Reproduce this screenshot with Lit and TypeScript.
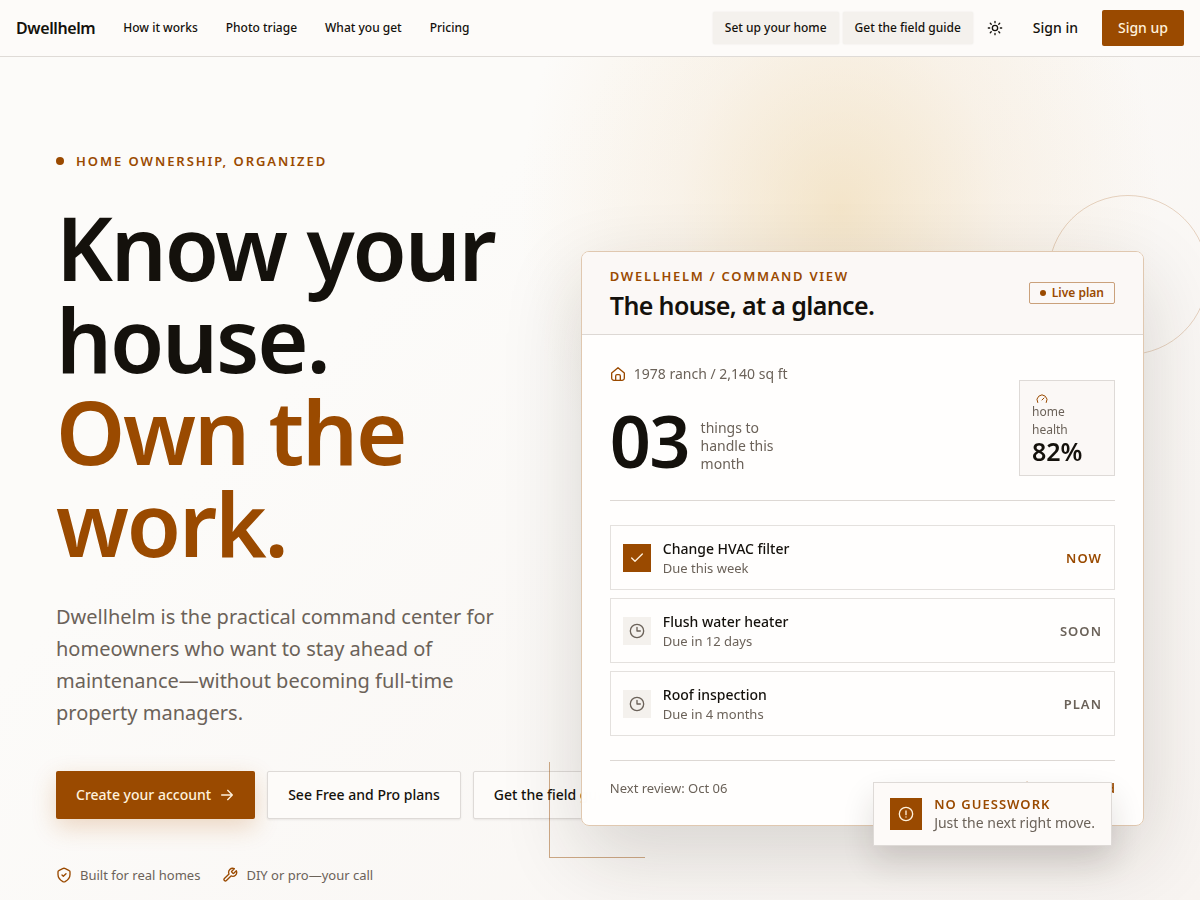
import { LitElement, html, css, svg } from "lit";
import { customElement } from "lit/decorators.js";

const icon = (size: number, body: unknown, cls = "") => html`<svg
  class="icon ${cls}" width=${size} height=${size} viewBox="0 0 24 24" fill="none"
  stroke="currentColor" stroke-width="2" stroke-linecap="round" stroke-linejoin="round"
  aria-hidden="true">${body}</svg>`;

const sun = svg`<circle cx="12" cy="12" r="4"/><path d="M12 2v2M12 20v2M4.93 4.93l1.41 1.41M17.66 17.66l1.41 1.41M2 12h2M20 12h2M6.34 17.66l-1.41 1.41M19.07 4.93l-1.41 1.41"/>`;
const arrow = svg`<path d="M4 12h16M13 5l7 7-7 7"/>`;
const shield = svg`<path d="M21 11.2V7.300c0-1.100-.3-1.600-1.200-2L14 2.400c-1.300-.6-2.700-.6-4 0L4.200 5.300C3.300 5.700 3 6.200 3 7.300v3.900c0 5.600 3.700 8.600 7.300 10.700 1.100.6 2.300.6 3.400 0C17.300 19.800 21 16.800 21 11.200z"/><path d="m9 12 2 2 4-4"/>`;
const wrench = svg`<path d="M14.7 6.3a1 1 0 0 0 0 1.4l1.6 1.6a1 1 0 0 0 1.4 0l3.77-3.77a6 6 0 0 1-7.94 7.94l-6.91 6.91a2.12 2.12 0 0 1-3-3l6.91-6.91a6 6 0 0 1 7.94-7.94z"/>`;
const house = svg`<path d="M2.500 10.500 12 2.500l9.500 8V18a3.500 3.500 0 0 1-3.500 3.500H6A3.500 3.500 0 0 1 2.500 18z"/><path d="M8.500 21.500V15a2 2 0 0 1 2-2h3a2 2 0 0 1 2 2v6.500"/>`;
const gauge = svg`<path d="m12 14 4-4"/><path d="M3.34 19a10 10 0 1 1 17.32 0"/>`;
const check = svg`<path d="M20 6 9 17l-5-5"/>`;
const clock = svg`<circle cx="12" cy="12" r="10"/><path d="M12 6.500V12h5"/>`;
const alertIcon = svg`<circle cx="12" cy="12" r="10"/><path d="M12 7.500V13M12 16.500h.01"/>`;
const spark = svg`<path d="M12 2l2.500 7.500L22 12l-7.500 2.500L12 22l-2.500-7.500L2 12l7.500-2.500z"/>`;

interface Task { name: string; due: string; status: string; active: boolean; }

const TASKS: Task[] = [
  { name: "Change HVAC filter", due: "Due this week", status: "Now", active: true },
  { name: "Flush water heater", due: "Due in 12 days", status: "Soon", active: false },
  { name: "Roof inspection", due: "Due in 4 months", status: "Plan", active: false },
];

const base = css`
  *, *::before, *::after { box-sizing: border-box; }
  h1, h2, p, ul { margin: 0; padding: 0; }
  ul { list-style: none; }
  a { color: inherit; text-decoration: none; }
  button { font: inherit; color: inherit; border: 0; background: none; cursor: pointer; }
  .icon { display: block; flex: none; }
`;

@customElement("site-nav")
export class SiteNav extends LitElement {
  static styles = [base, css`
    :host { display: block; }
    .bar {
      display: flex; align-items: center; justify-content: space-between;
      height: 57px; padding: 0 16px;
      background: #fdfbf9; border-bottom: 1px solid #dfdbd7;
    }
    .left { display: flex; align-items: center; gap: 28px; font-size: 12px; line-height: 18px; font-weight: 500; }
    .brand { font-size: 16px; line-height: 24px; font-weight: 600; letter-spacing: -0.025em; }
    .right { display: flex; align-items: center; gap: 4px; }
    .soft {
      padding: 0 12px; height: 32px; border-radius: 2px;
      background: #f4f1ed; box-shadow: 0 0 2px rgba(40, 30, 20, 0.1);
      font-size: 12px; line-height: 18px; font-weight: 500;
    }
    .theme { display: grid; place-items: center; width: 36px; height: 36px; padding: 0; }
    .sign { padding: 0 16px; height: 36px; font-size: 14px; line-height: 20px; font-weight: 500; border-radius: 2px; }
    .up { margin-left: 4px; background: #9a4a00; color: #fff1dc; }
  `];
  render() {
    return html`
      <header class="bar">
        <nav class="left">
          <a class="brand" href="#">Dwellhelm</a>
          <a href="#how">How it works</a>
          <a href="#triage">Photo triage</a>
          <a href="#features">What you get</a>
          <a href="#pricing">Pricing</a>
        </nav>
        <div class="right">
          <button class="soft">Set up your home</button>
          <button class="soft">Get the field guide</button>
          <button class="theme" aria-label="Toggle theme">${icon(16, sun)}</button>
          <button class="sign">Sign in</button>
          <button class="sign up">Sign up</button>
        </div>
      </header>`;
  }
}

@customElement("command-card")
export class CommandCard extends LitElement {
  static styles = [base, css`
    :host { display: block; position: relative; }
    .ring {
      position: absolute; top: -56px; right: -64px; width: 160px; height: 160px;
      border: 1px solid rgba(154, 74, 0, 0.22); border-radius: 50%;
    }
    .corner {
      position: absolute; left: -32px; bottom: -32px; width: 96px; height: 96px;
      border: solid rgba(154, 74, 0, 0.45); border-width: 0 0 1px 1px;
    }
    .card {
      position: relative; border: 1px solid #e0c8b0; border-radius: 8px;
      background: rgba(255, 254, 253, 0.98); backdrop-filter: blur(12px);
      box-shadow: 0 28px 80px rgba(40, 30, 20, 0.16);
    }
    .head {
      display: flex; align-items: center; justify-content: space-between;
      padding: 12px 28px; border-bottom: 1px solid #ddd8d4; border-radius: 7px 7px 0 0;
      background: #fbf8f6;
    }
    .eyebrow {
      font-size: 13px; line-height: 24px; font-weight: 600; letter-spacing: 0.13em;
      text-transform: uppercase; color: #9a4a00;
    }
    .title { font-size: 25px; line-height: 34px; font-weight: 600; letter-spacing: -0.025em; }
    .live {
      display: flex; align-items: center; gap: 6px; height: 22px; padding: 0 10px;
      border: 1px solid rgba(154, 74, 0, 0.5); border-radius: 2px;
      font-size: 12px; line-height: 18px; font-weight: 600; color: #9a4a00;
    }
    .live::before { content: ""; width: 6px; height: 6px; border-radius: 50%; background: currentColor; }
    .body { padding: 28px; }
    .summary {
      display: flex; align-items: flex-end; justify-content: space-between;
      padding-bottom: 24px; border-bottom: 1px solid #ddd8d4;
    }
    .home { display: flex; align-items: center; gap: 8px; font-size: 14px; line-height: 22px; color: #6b6259; }
    .home .icon { color: #9a4a00; }
    .count { display: flex; align-items: flex-end; gap: 12px; margin-top: 19px; }
    .number { font-size: 72px; line-height: 72px; font-weight: 600; letter-spacing: -0.025em; }
    .things { width: 88px; padding-bottom: 3px; font-size: 14px; line-height: 18px; color: #6b6259; }
    .health {
      width: 96px; padding: 12px; border: 1px solid #dedad7; background: #fbf8f6;
      font-size: 12px; line-height: 18px; color: #6b6259;
    }
    .health .icon { margin: 0 0 -2px 4px; color: #9a4a00; }
    .score { display: block; font-size: 25px; line-height: 24px; font-weight: 600; color: #14110c; }
    .tasks { display: grid; gap: 8px; padding: 24px 0; border-bottom: 1px solid #ddd8d4; }
    .task {
      display: flex; align-items: center; gap: 12px; height: 65px; padding: 0 12px;
      border: 1px solid #e4e1de;
    }
    .mark { display: grid; place-items: center; width: 28px; height: 28px; background: #f4f1ed; color: #6b6259; }
    .mark.on { background: #9a4a00; color: #fff1dc; }
    .name { font-size: 14px; line-height: 20px; font-weight: 500; }
    .due { font-size: 13px; line-height: 18px; color: #6b6259; }
    .status {
      margin-left: auto; font-size: 13px; line-height: 18px; font-weight: 600; letter-spacing: 0.08em;
      text-transform: uppercase; color: #6b6259;
    }
    .status.on { color: #9a4a00; }
    .foot {
      display: flex; align-items: center; justify-content: space-between; padding-top: 18px;
      font-size: 13px; line-height: 18px; color: #6b6259;
    }
    .plan { display: flex; align-items: center; gap: 6px; font-weight: 600; color: #9a4a00; }
    .note {
      position: absolute; right: 32px; bottom: -20px; display: flex; align-items: center; gap: 12px;
      height: 64px; padding: 0 16px; border: 1px solid #dedad7; background: #fdfaf8;
      box-shadow: 0 16px 32px rgba(40, 30, 20, 0.14);
      font-size: 14px; line-height: 20px; color: #6b6259;
    }
    .note .eyebrow { line-height: 18px; letter-spacing: 0.08em; }
    .badge { display: grid; place-items: center; width: 32px; height: 32px; background: #9a4a00; color: #fff1dc; }
  `];
  render() {
    return html`
      <div class="ring"></div>
      <div class="corner"></div>
      <section class="card">
        <header class="head">
          <div>
            <p class="eyebrow">Dwellhelm / Command view</p>
            <h2 class="title">The house, at a glance.</h2>
          </div>
          <span class="live">Live plan</span>
        </header>
        <div class="body">
          <div class="summary">
            <div>
              <p class="home">${icon(16, house)} 1978 ranch / 2,140 sq ft</p>
              <div class="count">
                <span class="number">03</span>
                <span class="things">things to handle this month</span>
              </div>
            </div>
            <div class="health">
              ${icon(12, gauge)}
              <div>home health</div>
              <strong class="score">82%</strong>
            </div>
          </div>
          <ul class="tasks">
            ${TASKS.map((t) => html`
              <li class="task">
                <span class="mark ${t.active ? "on" : ""}">${icon(16, t.active ? check : clock)}</span>
                <div>
                  <p class="name">${t.name}</p>
                  <p class="due">${t.due}</p>
                </div>
                <span class="status ${t.active ? "on" : ""}">${t.status}</span>
              </li>`)}
          </ul>
          <footer class="foot">
            <span>Next review: Oct 06</span>
            <span class="plan">${icon(14, spark)} Plan synced</span>
          </footer>
        </div>
      </section>
      <aside class="note">
        <span class="badge">${icon(16, alertIcon)}</span>
        <div>
          <p class="eyebrow">No guesswork</p>
          <p>Just the next right move.</p>
        </div>
      </aside>`;
  }
}

@customElement("app-root")
export class AppRoot extends LitElement {
  static styles = [base, css`
    :host {
      display: flex; flex-direction: column; min-height: 100vh;
      font-family: "Noto Sans", sans-serif; font-size: 14px; color: #14110c;
    }
    .hero {
      flex: 1; display: grid; grid-template-columns: 0.9fr 1.1fr; gap: 64px; align-items: start;
      padding: 94px 56px 14px; overflow: hidden;
      background:
        radial-gradient(ellipse 320px 380px at 70% 18%, rgba(236, 208, 156, 0.5), rgba(240, 218, 185, 0.25) 50%, rgba(248, 235, 220, 0)),
        linear-gradient(135deg, #fcfbf9 30%, #f8f4f1);
    }
    .eyebrow {
      display: flex; align-items: center; gap: 12px;
      font-size: 13px; line-height: 20px; font-weight: 600; letter-spacing: 0.15em;
      text-transform: uppercase; color: #9a4a00;
    }
    .eyebrow::before { content: ""; width: 8px; height: 8px; border-radius: 50%; background: currentColor; }
    .headline { margin-top: 30px; font-size: 88px; line-height: 92px; font-weight: 600; letter-spacing: -0.025em; }
    .accent { color: #9a4a00; }
    .lead { margin-top: 32px; font-size: 20px; line-height: 32px; color: #6b6259; }
    .actions { display: flex; gap: 12px; margin-top: 42px; }
    .btn {
      display: flex; align-items: center; gap: 8px; flex: none; height: 48px; padding: 0 20px;
      border: 1px solid #dedad7; border-radius: 2px; background: #fdfbf9;
      font-size: 14px; line-height: 20px; font-weight: 500; box-shadow: 0 1px 2px rgba(40, 30, 20, 0.08);
    }
    .primary {
      border: 0; background: #9a4a00; color: #fff1dc;
      box-shadow: 0 8px 24px rgba(190, 100, 20, 0.24);
    }
    .trust { display: flex; flex-wrap: wrap; gap: 12px 22px; margin-top: 46px; font-size: 13px; line-height: 20px; color: #6b6259; }
    .trust li { display: flex; align-items: center; gap: 8px; }
    .trust .icon { color: #9a4a00; }
    .visual { padding-top: 100px; }
  `];
  render() {
    return html`
      <site-nav></site-nav>
      <main class="hero">
        <div>
          <p class="eyebrow">Home ownership, organized</p>
          <h1 class="headline">Know your house. <span class="accent">Own the work.</span></h1>
          <p class="lead">Dwellhelm is the practical command center for homeowners who want to stay ahead of maintenance—without becoming full-time property managers.</p>
          <div class="actions">
            <button class="btn primary">Create your account ${icon(16, arrow)}</button>
            <button class="btn">See Free and Pro plans</button>
            <button class="btn">Get the field guide</button>
          </div>
          <ul class="trust">
            <li>${icon(16, shield)} Built for real homes</li>
            <li>${icon(16, wrench)} DIY or pro—your call</li>
          </ul>
        </div>
        <div class="visual"><command-card></command-card></div>
      </main>`;
  }
}
